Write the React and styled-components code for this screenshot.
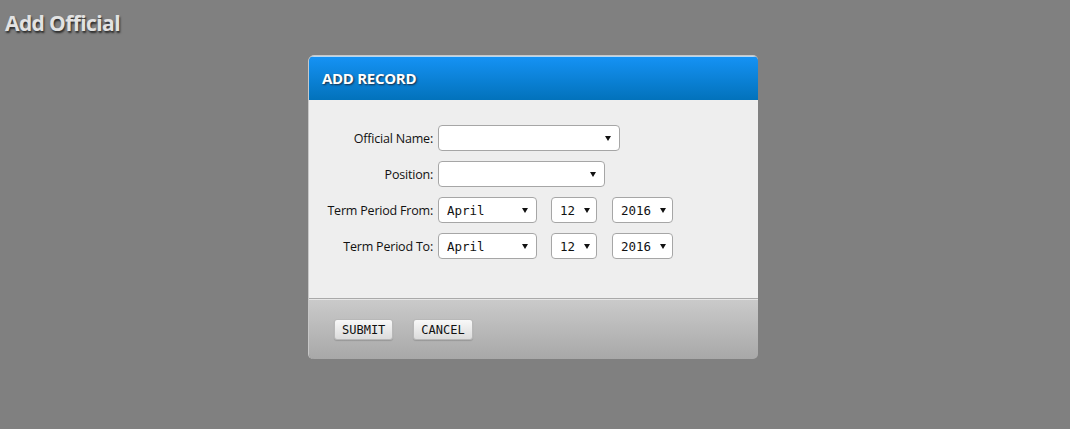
import styled, { createGlobalStyle } from 'styled-components';

const GlobalStyle = createGlobalStyle`
  html, body {
    margin: 0;
    padding: 0;
    background: #808080;
    font-family: "Open Sans", "Liberation Sans", sans-serif;
  }
`;

const Page = styled.div`
  width: 1070px;
  height: 429px;
  overflow: hidden;
`;

const PageTitle = styled.h1`
  margin: 0;
  padding: 10px 0 0 5px;
  height: 46px;
  box-sizing: border-box;
  font-size: 21px;
  font-weight: 700;
  letter-spacing: -0.6px;
  color: #e2e2e2;
  text-shadow: 1px 2px 2px #2a2a2a;
  line-height: 26px;
`;

const Dialog = styled.div`
  width: 449px;
  margin: 10px 0 0 309px;
  border-radius: 5px;
  overflow: hidden;
  box-shadow: -1px 0 0 #c8c8c8, 0 -1px 0 #c8c8c8;
`;

const DialogHeader = styled.div`
  height: 44px;
  box-sizing: border-box;
  padding: 0 13px 2px;
  display: flex;
  align-items: center;
  background: linear-gradient(#1592f4, #0272bb);
  border-top: 1px solid #b4d8f4;
  color: #fff;
  font-size: 15px;
  font-weight: 700;
  letter-spacing: -0.3px;
  text-shadow: 1px 1px 2px #1a2a40;
`;

const DialogBody = styled.div`
  background: #eeeeee;
  padding: 25px 0 39px;
  display: flex;
  flex-direction: column;
  gap: 10px;
  border-bottom: 1px solid #a9a9a9;
`;

const Row = styled.div`
  display: flex;
  align-items: center;
`;

const Label = styled.label`
  width: 124px;
  text-align: right;
  font-size: 12.5px;
  color: #111;
  letter-spacing: -0.2px;
  padding-right: 5px;
`;

const SelectWrap = styled.div`
  position: relative;
  width: ${(p) => p.$w}px;
  margin-left: ${(p) => p.$gap || 0}px;
  height: 26px;

  &::after {
    content: '';
    position: absolute;
    right: ${(p) => (p.$w > 90 ? 9 : 7)}px;
    top: 11px;
    border-left: 3px solid transparent;
    border-right: 3px solid transparent;
    border-top: 5px solid #111;
    pointer-events: none;
  }
`;

const Select = styled.select`
  appearance: none;
  -webkit-appearance: none;
  width: 100%;
  height: 100%;
  box-sizing: border-box;
  background: #fff;
  border: 1px solid #a6a6a6;
  border-radius: 4px;
  padding: 0 0 0 8px;
  font-family: "DejaVu Sans Mono", "Liberation Mono", monospace;
  font-size: 12.5px;
  color: #111;
  outline: none;
`;

const DialogFooter = styled.div`
  height: 60px;
  box-sizing: border-box;
  border-top: 1px solid #e6e6e6;
  background: linear-gradient(#cacaca, #a8a8a8);
  display: flex;
  align-items: center;
  padding: 0 0 0 25px;
  gap: 20px;
`;

const Button = styled.button`
  height: 21px;
  box-sizing: border-box;
  padding: 0 7px;
  background: linear-gradient(#f8f8f8, #dcdcdc);
  border: 1px solid #b8b8b8;
  border-radius: 3px;
  font-family: "DejaVu Sans Mono", "Liberation Mono", monospace;
  font-size: 12px;
  color: #111;
  box-shadow: 0 1px 1px rgba(0, 0, 0, 0.15);
`;

const months = ['January', 'February', 'March', 'April', 'May', 'June', 'July', 'August', 'September', 'October', 'November', 'December'];
const days = Array.from({ length: 31 }, (_, i) => i + 1);
const years = Array.from({ length: 20 }, (_, i) => 2006 + i);

function DateSelects() {
  return (
    <>
      <SelectWrap $w={99}>
        <Select defaultValue='April'>
          {months.map((m) => <option key={m}>{m}</option>)}
        </Select>
      </SelectWrap>
      <SelectWrap $w={46} $gap={14}>
        <Select defaultValue='12'>
          {days.map((d) => <option key={d}>{d}</option>)}
        </Select>
      </SelectWrap>
      <SelectWrap $w={61} $gap={15}>
        <Select defaultValue='2016'>
          {years.map((y) => <option key={y}>{y}</option>)}
        </Select>
      </SelectWrap>
    </>
  );
}

export default function App() {
  return (
    <Page>
      <GlobalStyle />
      <PageTitle>Add Official</PageTitle>
      <Dialog>
        <DialogHeader>ADD RECORD</DialogHeader>
        <DialogBody>
          <Row>
            <Label>Official Name:</Label>
            <SelectWrap $w={182}>
              <Select><option></option></Select>
            </SelectWrap>
          </Row>
          <Row>
            <Label>Position:</Label>
            <SelectWrap $w={167}>
              <Select><option></option></Select>
            </SelectWrap>
          </Row>
          <Row>
            <Label>Term Period From:</Label>
            <DateSelects />
          </Row>
          <Row>
            <Label>Term Period To:</Label>
            <DateSelects />
          </Row>
        </DialogBody>
        <DialogFooter>
          <Button>SUBMIT</Button>
          <Button>CANCEL</Button>
        </DialogFooter>
      </Dialog>
    </Page>
  );
}
